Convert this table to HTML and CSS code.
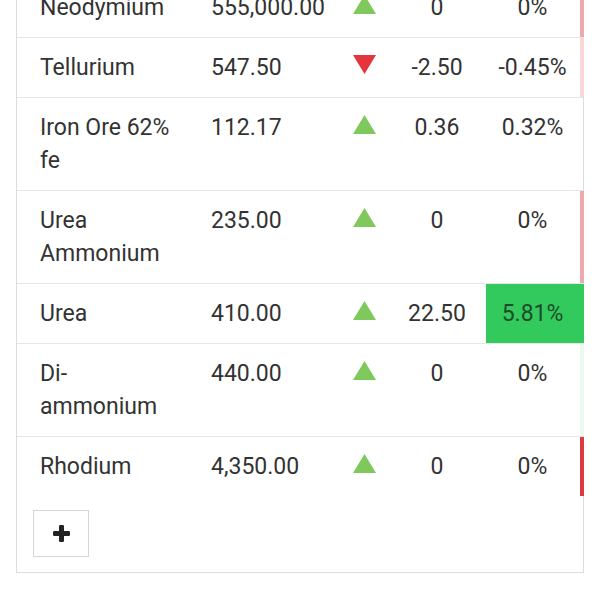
FILE: index.html
```html
<!DOCTYPE html>
<html>
<head>
<meta charset="utf-8">
<link rel="stylesheet" href="styles.css">
</head>
<body>
<div class="card">
  <div class="row">
    <div class="name">Neodymium</div>
    <div class="price">555,000.00</div>
    <div class="arrow"><svg class="tri up" viewBox="0 0 23 19"><polygon points="11.5,0 23,19 0,19"/></svg></div>
    <div class="chg">0</div>
    <div class="pct">0%</div>
    <div class="bar bar-red2"></div>
  </div>
  <div class="row">
    <div class="name">Tellurium</div>
    <div class="price">547.50</div>
    <div class="arrow"><svg class="tri down" viewBox="0 0 23 19"><polygon points="0,0 23,0 11.5,19"/></svg></div>
    <div class="chg">-2.50</div>
    <div class="pct">-0.45%</div>
    <div class="bar bar-red1"></div>
  </div>
  <div class="row">
    <div class="name">Iron Ore 62% fe</div>
    <div class="price">112.17</div>
    <div class="arrow"><svg class="tri up" viewBox="0 0 23 19"><polygon points="11.5,0 23,19 0,19"/></svg></div>
    <div class="chg">0.36</div>
    <div class="pct">0.32%</div>
    <div class="bar"></div>
  </div>
  <div class="row">
    <div class="name">Urea Ammonium</div>
    <div class="price">235.00</div>
    <div class="arrow"><svg class="tri up" viewBox="0 0 23 19"><polygon points="11.5,0 23,19 0,19"/></svg></div>
    <div class="chg">0</div>
    <div class="pct">0%</div>
    <div class="bar bar-red2"></div>
  </div>
  <div class="row">
    <div class="name">Urea</div>
    <div class="price">410.00</div>
    <div class="arrow"><svg class="tri up" viewBox="0 0 23 19"><polygon points="11.5,0 23,19 0,19"/></svg></div>
    <div class="chg">22.50</div>
    <div class="pct pct-green">5.81%</div>
    <div class="bar bar-green"></div>
  </div>
  <div class="row">
    <div class="name">Di-ammonium</div>
    <div class="price">440.00</div>
    <div class="arrow"><svg class="tri up" viewBox="0 0 23 19"><polygon points="11.5,0 23,19 0,19"/></svg></div>
    <div class="chg">0</div>
    <div class="pct">0%</div>
    <div class="bar bar-mint"></div>
  </div>
  <div class="row last">
    <div class="name">Rhodium</div>
    <div class="price">4,350.00</div>
    <div class="arrow"><svg class="tri up" viewBox="0 0 23 19"><polygon points="11.5,0 23,19 0,19"/></svg></div>
    <div class="chg">0</div>
    <div class="pct">0%</div>
    <div class="bar bar-red3"></div>
  </div>
  <button class="add" type="button" aria-label="Add">
    <svg viewBox="0 0 17 17" width="17" height="17"><rect x="6" y="0" width="5" height="17" rx="1.2"/><rect x="0" y="6" width="17" height="5" rx="1.2"/></svg>
  </button>
</div>
</body>
</html>
```
FILE: styles.css
```css
html, body {
  margin: 0;
  padding: 0;
  background: #ffffff;
}
body {
  font-family: Roboto, "Liberation Sans", sans-serif;
  font-size: 23px;
  line-height: 33px;
  color: #333333;
}
.card {
  margin: -23px 16px 0 16px;
  border: 1px solid #dcdcdc;
  background: #fff;
}
.row {
  display: grid;
  grid-template-columns: 195px 118px 68px 88px 93px 4px;
  border-bottom: 1px solid #e6e6e6;
}
.row.last {
  border-bottom: none;
}
.row > div {
  padding: 13px 0;
}
.name {
  padding-left: 23px !important;
  padding-right: 32px !important;
}
.price {
  margin-left: -1px;
}
.arrow {
  display: flex;
  justify-content: center;
  align-items: flex-start;
}
.tri {
  display: block;
  width: 23px;
  height: 19px;
  margin-top: 4px;
}
.tri.up polygon { fill: #7fc95c; }
.tri.down polygon { fill: #e5343b; }
.chg {
  text-align: center;
  padding-right: 10px !important;
}
.pct {
  text-align: center;
}
.pct-green {
  background: #33ca5d;
  color: #1f4a2a;
}
.bar {
  padding: 0 !important;
  width: 4px;
  margin-left: 1px;
  margin-right: -1px;
}
.bar-red1 { background: #f8d7d8; }
.bar-red2 { background: #eda9ac; }
.bar-red3 { background: #dc3b44; }
.bar-green { background: #33ca5d; margin-left: 0; width: 5px; }
.bar-mint { background: #ecf9f1; }
.add {
  display: flex;
  align-items: center;
  justify-content: center;
  width: 56px;
  height: 47px;
  margin: 14px 0 15px 16px;
  padding: 0;
  background: #fff;
  border: 1px solid #d6d6d6;
  border-radius: 0;
}
.add svg rect { fill: #232323; }
```
